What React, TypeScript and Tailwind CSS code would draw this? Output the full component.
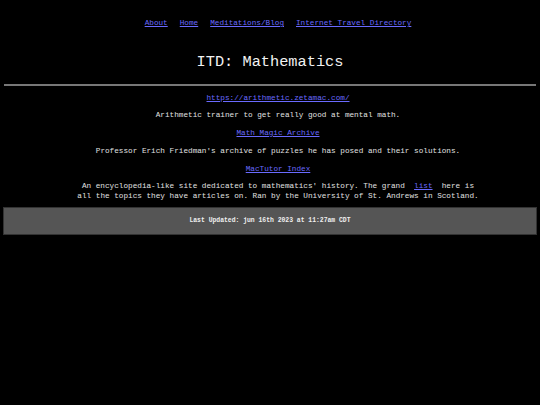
import React from "react";

const link = "text-[#6a6aff] underline";

export default function App() {
  return (
    <div
      className="min-h-[405px] w-full bg-black text-[#e0e0e0]"
      style={{ fontFamily: '"Liberation Mono", monospace' }}
    >
      <nav className="flex justify-center gap-[12px] pt-[18px] pl-[16px] text-[7.7px] leading-[10px]">
        <a className={link} href="#">About</a>
        <a className={link} href="#">Home</a>
        <a className={link} href="#">Meditations/Blog</a>
        <a className={link} href="#">Internet Travel Directory</a>
      </nav>
      <h1 className="mt-[24px] text-center text-[15.3px] leading-[20px] text-[#f2f2f2]">
        ITD: Mathematics
      </h1>
      <div className="mx-[4px] mt-[12px] h-[2px] bg-[#777]" />
      <div className="flex flex-col items-center pl-[16px] text-[7.7px] leading-[10px]">
        <a className={`${link} mt-[7px]`} href="#">https://arithmetic.zetamac.com/</a>
        <p className="mt-[7px]">Arithmetic trainer to get really good at mental math.</p>
        <a className={`${link} mt-[8px]`} href="#">Math Magic Archive</a>
        <p className="mt-[8px]">Professor Erich Friedman's archive of puzzles he has posed and their solutions.</p>
        <a className={`${link} mt-[8px]`} href="#">MacTutor Index</a>
        <p className="mt-[7px] text-center">
          {"An encyclopedia-like site dedicated to mathematics' history. The grand\u00a0\u00a0"}
          <a className={link} href="#">list</a>
          {"\u00a0\u00a0here is"}
          <br />
          {"all the topics they have articles on. Ran by the University of St. Andrews in Scotland."}
        </p>
      </div>
      <div className="mx-[3px] mt-[6px] flex h-[28px] items-center justify-center border border-[#333] bg-[#555] text-[6.4px] font-bold text-[#f0f0f0]">
        Last Updated: jun 16th 2023 at 11:27am CDT
      </div>
    </div>
  );
}
